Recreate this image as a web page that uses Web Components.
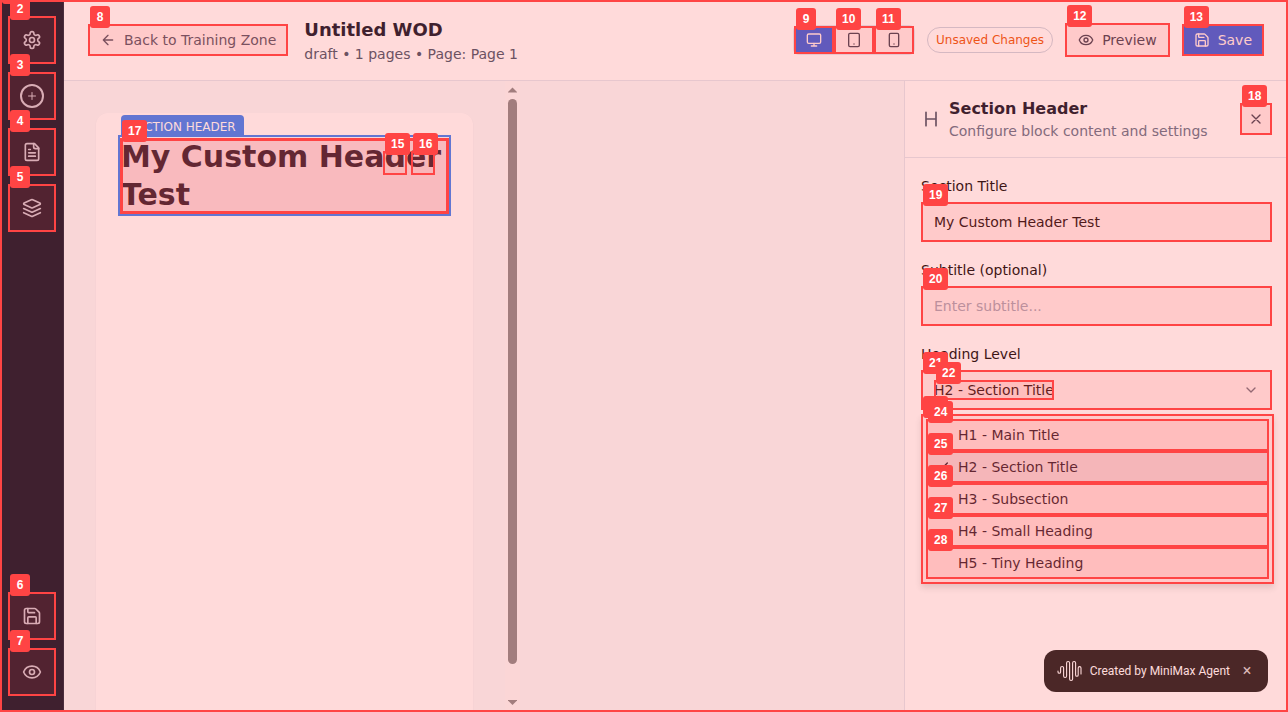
<!DOCTYPE html>
<html lang="en">
<head>
<meta charset="utf-8">
<title>Untitled WOD</title>
<style>
body { margin: 0; font: 14px/20px "DejaVu Sans", sans-serif; color: #0f172a; }
</style>
</head>
<body>
<wod-app></wod-app>
<script>
const ICONS = {
  gear: '<path d="M12.22 2h-.44a2 2 0 0 0-2 2v.18a2 2 0 0 1-1 1.73l-.43.25a2 2 0 0 1-2 0l-.15-.08a2 2 0 0 0-2.73.73l-.22.38a2 2 0 0 0 .73 2.73l.15.1a2 2 0 0 1 1 1.72v.51a2 2 0 0 1-1 1.74l-.15.09a2 2 0 0 0-.73 2.73l.22.38a2 2 0 0 0 2.73.73l.15-.08a2 2 0 0 1 2 0l.43.25a2 2 0 0 1 1 1.73V20a2 2 0 0 0 2 2h.44a2 2 0 0 0 2-2v-.18a2 2 0 0 1 1-1.73l.43-.25a2 2 0 0 1 2 0l.15.08a2 2 0 0 0 2.73-.73l.22-.39a2 2 0 0 0-.73-2.73l-.15-.08a2 2 0 0 1-1-1.74v-.5a2 2 0 0 1 1-1.74l.15-.09a2 2 0 0 0 .73-2.73l-.22-.38a2 2 0 0 0-2.73-.73l-.15.08a2 2 0 0 1-2 0l-.43-.25a2 2 0 0 1-1-1.73V4a2 2 0 0 0-2-2z"/><circle cx="12" cy="12" r="3"/>',
  plus: '<path d="M5 12h14M12 5v14"/>',
  file: '<path d="M15 2H6a2 2 0 0 0-2 2v16a2 2 0 0 0 2 2h12a2 2 0 0 0 2-2V7Z"/><path d="M14 2v4a2 2 0 0 0 2 2h4M10 9H8M16 13H8M16 17H8"/>',
  layers: '<path d="m12.83 2.18a2 2 0 0 0-1.66 0L2.6 6.08a1 1 0 0 0 0 1.83l8.58 3.91a2 2 0 0 0 1.66 0l8.58-3.9a1 1 0 0 0 0-1.83Z"/><path d="m22 17.65-9.17 4.16a2 2 0 0 1-1.66 0L2 17.65M22 12.65l-9.17 4.16a2 2 0 0 1-1.66 0L2 12.65"/>',
  save: '<path d="M15.2 3a2 2 0 0 1 1.4.6l3.8 3.8a2 2 0 0 1 .6 1.4V19a2 2 0 0 1-2 2H5a2 2 0 0 1-2-2V5a2 2 0 0 1 2-2z"/><path d="M17 21v-7a1 1 0 0 0-1-1H8a1 1 0 0 0-1 1v7M7 3v4a1 1 0 0 0 1 1h7"/>',
  eye: '<path d="M2.06 12.35a1 1 0 0 1 0-.7 10.75 10.75 0 0 1 19.88 0 1 1 0 0 1 0 .7 10.75 10.75 0 0 1-19.88 0"/><circle cx="12" cy="12" r="3"/>',
  back: '<path d="m12 19-7-7 7-7M19 12H5"/>',
  monitor: '<rect width="20" height="14" x="2" y="3" rx="2"/><path d="M8 21h8M12 17v4"/>',
  tablet: '<rect width="16" height="20" x="4" y="2" rx="2"/><path d="M12 18h.01"/>',
  phone: '<rect width="14" height="20" x="5" y="2" rx="2"/><path d="M12 18h.01"/>',
  heading: '<path d="M6 12h12M6 20V4M18 20V4"/>',
  close: '<path d="M18 6 6 18M6 6l12 12"/>',
  down: '<path d="m6 9 6 6 6-6"/>',
  check: '<path d="M20 6 9 17l-5-5"/>'
};

function define(name, html) {
  customElements.define(name, class extends HTMLElement {
    constructor() {
      super();
      const t = document.createElement('template');
      t.innerHTML = typeof html === 'function' ? html(this) : html;
      this.attachShadow({ mode: 'open' }).append(t.content.cloneNode(true));
    }
  });
}

/* Line icon; the host's size sets the drawing's size. */
define('ui-icon', el => `
<style>
:host { display: block; width: 16px; height: 16px; flex: none; }
svg { display: block; width: 100%; height: 100%; fill: none; stroke: currentColor; stroke-width: 2; stroke-linecap: round; stroke-linejoin: round; }
</style>
<svg viewBox="0 0 24 24" aria-hidden="true">${ICONS[el.getAttribute('name')]}</svg>`);

/* Numbered frame laid over whatever is slotted in; nested frames paint above it. */
define('tag-frame', el => `
<style>
:host { display: block; position: relative; }
.frame { position: absolute; inset: 0; z-index: 2; box-sizing: border-box; border: var(--frame-line, 2px) solid #ff4444; background: var(--frame-tint, rgba(255,68,68,.1)); pointer-events: none; }
.badge { position: absolute; left: 2px; top: -18px; z-index: 2; box-sizing: border-box; min-width: 20px; height: 22px; padding: 0 6px; border-radius: 3px; background: #ff4444; color: #fff; font: bold 12px/22px "Liberation Sans", sans-serif; text-align: center; pointer-events: none; }
</style>
<div class="frame"></div><div class="badge">${el.getAttribute('n')}</div><slot></slot>`);

define('side-rail', `
<style>
:host { display: flex; flex-direction: column; flex: none; box-sizing: border-box; width: 64px; padding: 16px 8px; gap: 8px; background: #0f172a; border-right: 1px solid #1e293b; color: #cbd5e1; }
tag-frame { width: 48px; }
button { display: flex; align-items: center; justify-content: center; width: 48px; height: 48px; padding: 0; border: 0; background: none; color: inherit; }
ui-icon { width: 20px; height: 20px; }
.ring { display: flex; align-items: center; justify-content: center; box-sizing: border-box; width: 24px; height: 24px; border: 2px solid; border-radius: 50%; }
.ring ui-icon { width: 12px; height: 12px; }
.end { margin-top: auto; }
</style>
<tag-frame n="2"><button aria-label="Settings"><ui-icon name="gear"></ui-icon></button></tag-frame>
<tag-frame n="3"><button aria-label="Add block"><span class="ring"><ui-icon name="plus"></ui-icon></span></button></tag-frame>
<tag-frame n="4"><button aria-label="Pages"><ui-icon name="file"></ui-icon></button></tag-frame>
<tag-frame n="5"><button aria-label="Layers"><ui-icon name="layers"></ui-icon></button></tag-frame>
<tag-frame n="6" class="end"><button aria-label="Save"><ui-icon name="save"></ui-icon></button></tag-frame>
<tag-frame n="7"><button aria-label="Preview"><ui-icon name="eye"></ui-icon></button></tag-frame>`);

define('top-bar', `
<style>
:host { display: flex; align-items: center; justify-content: space-between; flex: none; height: 80px; padding: 0 24px; background: #fff; border-bottom: 1px solid #e2e8f0; }
.group { display: flex; align-items: center; gap: 16px; }
.tools { display: flex; align-items: center; gap: 12px; }
button { display: flex; align-items: center; gap: 8px; box-sizing: border-box; height: 32px; padding: 0 12px; border: 0; border-radius: 6px; background: none; color: #334155; font: inherit; white-space: nowrap; }
.back { color: #475569; }
h1 { margin: 0; font-size: 18px; line-height: 28px; font-weight: bold; }
p { margin: 0; color: #475569; }
.devices { display: flex; border: 1px solid #e2e8f0; border-radius: 6px; }
.devices button { width: 40px; height: 28px; justify-content: center; padding: 0; }
.devices .on { background: #2563eb; color: #fff; border-radius: 0; }
.status { box-sizing: border-box; height: 26px; padding: 0 8px; border: 1px solid #cbd5e1; border-radius: 13px; color: #ea580c; font-size: 12px; line-height: 24px; white-space: nowrap; }
.preview { height: 34px; padding: 0 13px; }
.save { background: #2563eb; color: #fff; border-radius: 0; }
</style>
<div class="group">
  <tag-frame n="8"><button class="back"><ui-icon name="back"></ui-icon>Back to Training Zone</button></tag-frame>
  <div><h1>Untitled WOD</h1><p>draft • 1 pages • Page: Page 1</p></div>
</div>
<div class="tools">
  <div class="devices">
    <tag-frame n="9"><button class="on" aria-label="Desktop"><ui-icon name="monitor"></ui-icon></button></tag-frame>
    <tag-frame n="10"><button aria-label="Tablet"><ui-icon name="tablet"></ui-icon></button></tag-frame>
    <tag-frame n="11"><button aria-label="Mobile"><ui-icon name="phone"></ui-icon></button></tag-frame>
  </div>
  <span class="status">Unsaved Changes</span>
  <tag-frame n="12"><button class="preview"><ui-icon name="eye"></ui-icon>Preview</button></tag-frame>
  <tag-frame n="13"><button class="save"><ui-icon name="save"></ui-icon>Save</button></tag-frame>
</div>`);

define('scroll-track', `
<style>
:host { display: flex; flex-direction: column; align-items: center; flex: none; box-sizing: border-box; width: 15px; padding: 6px 0; gap: 6px; background: #fbfbfb; }
svg { display: block; width: 9px; height: 6px; fill: #8b8b8b; flex: none; }
.thumb { flex: 1; width: 9px; margin-bottom: 30px; border-radius: 5px; background: #8b8b8b; }
</style>
<svg viewBox="0 0 9 6"><path d="M-.5 5.500 4.500 .500 9.500 5.500z"/></svg>
<div class="thumb"></div>
<svg viewBox="0 0 9 6"><path d="M-.5 0h10L4.500 5z"/></svg>`);

define('page-canvas', `
<style>
:host { display: flex; flex: 1; min-width: 0; overflow: hidden; background: #f8fafc; }
.view { display: flex; flex: 0 1 441px; box-sizing: border-box; padding: 32px 32px 0; }
.page { flex: 1; min-width: 0; box-sizing: border-box; padding: 22px; border-radius: 12px 12px 0 0; background: #fff; box-shadow: 0 1px 2px rgba(15,23,42,.05); }
.block { position: relative; padding-top: 1px; border: 2px solid #3b82f6; background: #f7faff; }
.kind { position: absolute; left: 1px; bottom: 100%; box-sizing: border-box; height: 22px; padding: 0 8px; border-radius: 4px 4px 0 0; background: #3b82f6; color: #fff; font-size: 12px; line-height: 24px; white-space: nowrap; }
.title { --frame-line: 3px; --frame-tint: rgba(255,68,68,.19); }
h2 { margin: 0; padding: 0 1px; font-size: 30px; line-height: 38px; font-weight: bold; }
.acts { position: absolute; right: 14px; top: 14px; display: flex; gap: 4px; }
.acts tag-frame { --frame-tint: rgba(255,68,68,.04); }
.acts button { display: block; width: 24px; height: 24px; padding: 0; border: 0; background: none; }
</style>
<div class="view"><div class="page">
  <section class="block">
    <span class="kind">SECTION HEADER</span>
    <tag-frame n="17" class="title"><h2>My Custom Header Test</h2></tag-frame>
    <div class="acts">
      <tag-frame n="15"><button aria-label="Duplicate block"></button></tag-frame>
      <tag-frame n="16"><button aria-label="Delete block"></button></tag-frame>
    </div>
  </section>
</div></div>
<scroll-track></scroll-track>`);

define('block-panel', `
<style>
:host { display: block; flex: none; box-sizing: border-box; width: 384px; border-left: 1px solid #e2e8f0; background: #fff; }
header { display: flex; align-items: center; gap: 8px; padding: 16px; border-bottom: 1px solid #e2e8f0; color: #475569; }
header > ui-icon { width: 20px; height: 20px; }
header div { flex: 1; }
h2 { margin: 0; font-size: 16px; line-height: 24px; color: #0f172a; }
p { margin: 0; color: #64748b; }
.close { display: flex; align-items: center; justify-content: center; width: 32px; height: 32px; padding: 0; border: 0; background: none; color: #334155; }
form { display: flex; flex-direction: column; gap: 16px; padding: 16px; }
.field { display: flex; flex-direction: column; gap: 4px; position: relative; }
label { line-height: 24px; color: #0a0a0a; }
input, select { display: block; appearance: none; box-sizing: border-box; width: 100%; height: 40px; margin: 0; padding: 0 12px; border: 1px solid #e2e8f0; border-radius: 0; background: #fff; color: #0a0a0a; font: inherit; outline: 0; }
input::placeholder { color: #a3aec0; opacity: 1; }
.chevron { position: absolute; right: 13px; top: 12px; color: #475569; opacity: .8; }
.value { position: absolute; left: 13px; top: 38px; width: 120px; height: 20px; }
.menu { position: absolute; left: 0; right: -2px; top: 72px; }
.menu ul { margin: 0; padding: 5px; list-style: none; background: #fff; box-shadow: 0 4px 6px rgba(0,0,0,.12); }
.menu li { display: flex; align-items: center; height: 32px; padding: 0 8px; gap: 8px; }
.menu li > span { width: 16px; }
.menu .on { background: #f1f5f9; }
</style>
<header>
  <ui-icon name="heading"></ui-icon>
  <div><h2>Section Header</h2><p>Configure block content and settings</p></div>
  <tag-frame n="18"><button class="close" aria-label="Close"><ui-icon name="close"></ui-icon></button></tag-frame>
</header>
<form>
  <div class="field"><label for="title">Section Title</label>
    <tag-frame n="19"><input id="title" type="text" value="My Custom Header Test"></tag-frame></div>
  <div class="field"><label for="sub">Subtitle (optional)</label>
    <tag-frame n="20"><input id="sub" type="text" placeholder="Enter subtitle..."></tag-frame></div>
  <div class="field"><label for="level">Heading Level</label>
    <tag-frame n="21">
      <select id="level"><option>H1 - Main Title</option><option selected>H2 - Section Title</option><option>H3 - Subsection</option><option>H4 - Small Heading</option><option>H5 - Tiny Heading</option></select>
      <ui-icon class="chevron" name="down"></ui-icon>
    </tag-frame>
    <tag-frame n="22" class="value"></tag-frame>
    <tag-frame n="23" class="menu">
      <ul role="listbox" aria-label="Heading Level">
        <tag-frame n="24"><li role="option"><span></span>H1 - Main Title</li></tag-frame>
        <tag-frame n="25"><li role="option" class="on" aria-selected="true"><span><ui-icon name="check"></ui-icon></span>H2 - Section Title</li></tag-frame>
        <tag-frame n="26"><li role="option"><span></span>H3 - Subsection</li></tag-frame>
        <tag-frame n="27"><li role="option"><span></span>H4 - Small Heading</li></tag-frame>
        <tag-frame n="28"><li role="option"><span></span>H5 - Tiny Heading</li></tag-frame>
      </ul>
    </tag-frame>
  </div>
</form>`);

define('made-by', `
<style>
:host { position: fixed; right: 20px; bottom: 20px; display: flex; align-items: center; box-sizing: border-box; height: 42px; padding: 0 13px; gap: 8px; border-radius: 12px; background: #1e2020; color: #fff; font: 400 12px/16px Roboto, sans-serif; white-space: nowrap; }
svg { display: block; width: 25px; height: 22px; fill: none; stroke: currentColor; stroke-width: 1.1; stroke-linecap: round; }
button { width: 16px; height: 16px; margin-left: 1px; padding: 0; border: 0; background: none; color: #d4d4d4; font: 16px/16px Roboto, sans-serif; }
</style>
<svg viewBox="0 0 25 22" aria-hidden="true"><path d="M1 11v1a1.300 1.300 0 0 0 2.600 0V8a1.500 1.500 0 0 1 3 0v8a1.500 1.500 0 0 0 3 0V3a1.500 1.500 0 0 1 3 0v16a1.500 1.500 0 0 0 3 0V3a1.500 1.500 0 0 1 3 0v12a1.300 1.300 0 0 0 2.600 0V8a1.400 1.400 0 0 1 2.800 0v6"/></svg>
<span>Created by MiniMax Agent</span>
<button aria-label="Dismiss">×</button>`);

define('wod-app', `
<style>
:host { display: flex; height: 100vh; overflow: hidden; }
.main { display: flex; flex-direction: column; flex: 1; min-width: 0; }
.work { display: flex; flex: 1; min-height: 0; }
.cover { position: fixed; inset: 0; z-index: 1; box-sizing: border-box; border: 2px solid #ff4444; background: rgba(255,68,68,.2); pointer-events: none; }
.tab { position: fixed; left: 2px; top: 0; z-index: 1; width: 20px; height: 4px; border-radius: 0 0 3px 3px; background: #ff4444; }
</style>
<side-rail></side-rail>
<div class="main">
  <top-bar></top-bar>
  <div class="work"><page-canvas></page-canvas><block-panel></block-panel></div>
</div>
<made-by></made-by>
<div class="cover"></div><div class="tab"></div>`);
</script>
</body>
</html>
